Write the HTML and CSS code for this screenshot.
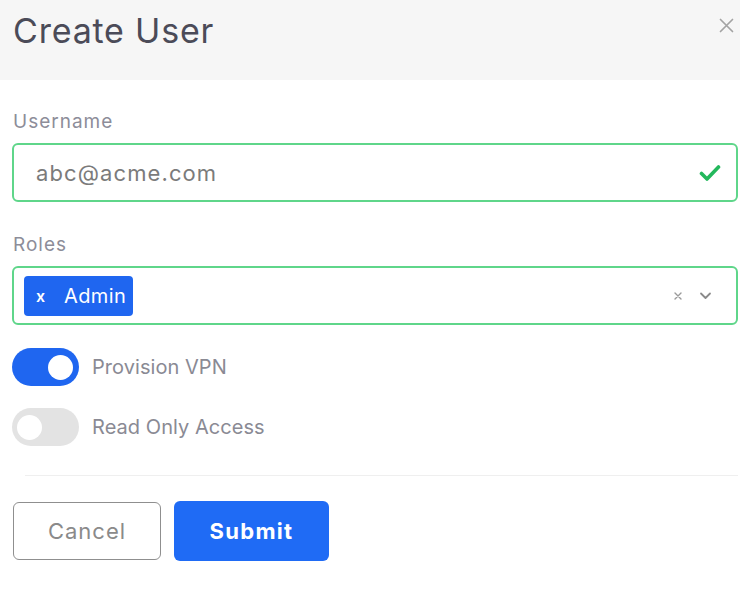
FILE: index.html
```html
<!DOCTYPE html>
<html lang="en">
<head>
<meta charset="utf-8">
<title>Create User</title>
<link rel="stylesheet" href="styles.css">
</head>
<body>
<div class="modal">
  <header class="modal-header">
    <h1 class="modal-title">Create User</h1>
    <button class="close-btn" aria-label="Close">
      <svg width="15" height="15" viewBox="0 0 15 15"><path d="M1.5 1.5 L13.5 13.5 M13.5 1.5 L1.5 13.5" stroke="#a3a3a3" stroke-width="1.7" stroke-linecap="round" fill="none"/></svg>
    </button>
  </header>
  <div class="modal-body">
    <label class="field-label">Username</label>
    <div class="input valid">
      <span class="input-text">abc@acme.com</span>
      <svg class="check" width="22" height="18" viewBox="0 0 22 18"><path d="M2.5 9.5 L8 15 L19.5 3" stroke="#23b85c" stroke-width="3.6" stroke-linecap="round" stroke-linejoin="round" fill="none"/></svg>
    </div>

    <label class="field-label roles-label">Roles</label>
    <div class="input select">
      <div class="tags">
        <span class="tag"><span class="tag-x">x</span><span class="tag-text">Admin</span></span>
      </div>
      <div class="select-icons">
        <svg width="10" height="10" viewBox="0 0 10 10"><path d="M2 2 L8 8 M8 2 L2 8" stroke="#9a9a9a" stroke-width="1.4" stroke-linecap="round" fill="none"/></svg>
        <svg width="13" height="9" viewBox="0 0 13 9"><path d="M2 2.5 L6.5 7 L11 2.5" stroke="#8a8a8a" stroke-width="1.8" stroke-linecap="round" stroke-linejoin="round" fill="none"/></svg>
      </div>
    </div>

    <div class="toggle-row first">
      <span class="switch on"><span class="knob"></span></span>
      <span class="toggle-label">Provision VPN</span>
    </div>
    <div class="toggle-row">
      <span class="switch off"><span class="knob"></span></span>
      <span class="toggle-label">Read Only Access</span>
    </div>

    <hr class="divider">

    <div class="actions">
      <button class="btn btn-cancel">Cancel</button>
      <button class="btn btn-submit">Submit</button>
    </div>
  </div>
</div>
</body>
</html>
```
FILE: styles.css
```css
* { box-sizing: border-box; }
html, body { margin: 0; padding: 0; background: #ffffff; }
body { font-family: "Inter", "Open Sans", sans-serif; width: 740px; height: 595px; overflow: hidden; }

.modal { width: 740px; }

.modal-header {
  height: 80px;
  background: #f6f6f6;
  display: flex;
  justify-content: space-between;
  align-items: flex-start;
  padding: 12px 6px 0 13px;
}
.modal-title {
  margin: 0;
  font-size: 34px;
  line-height: 38px;
  font-weight: 400;
  color: #4b4b58;
  letter-spacing: 0.8px;
}
.close-btn {
  border: 0;
  background: none;
  padding: 0;
  margin-top: 6px;
  width: 15px;
  height: 15px;
  display: flex;
}

.modal-body { padding: 32px 2px 0 12px; }

.field-label {
  display: block;
  font-size: 19px;
  line-height: 20px;
  color: #8d8d99;
  margin-left: 1px;
  letter-spacing: 1px;
}
.roles-label { margin-top: 33px; }

.input {
  margin-top: 11px;
  height: 59px;
  border: 2px solid #5fd68a;
  border-radius: 6px;
  display: flex;
  align-items: center;
  justify-content: space-between;
}
.input.valid { padding: 0 15px 0 22px; }
.input-text { font-size: 22px; color: #7b7b7b; letter-spacing: 1.1px; }
.check { display: block; }

.input.select { padding: 0 24px 0 10px; }
.tags { display: flex; }
.tag {
  display: flex;
  align-items: center;
  height: 40px;
  width: 109px;
  background: #1f66f0;
  border-radius: 4px;
  color: #ffffff;
  padding-left: 12px;
  font-size: 20px;
}
.tag-x { font-size: 16px; width: 28px; font-weight: 600; }
.tag-text { letter-spacing: 0.4px; }
.select-icons { display: flex; align-items: center; gap: 16px; }
.select-icons svg { display: block; }

.toggle-row {
  display: flex;
  align-items: center;
  gap: 13px;
  margin-top: 22px;
}
.toggle-row.first { margin-top: 23px; }
.switch {
  width: 67px;
  height: 38px;
  border-radius: 19px;
  display: flex;
  align-items: center;
  padding: 0 6px;
}
.switch.on { background: #1f66f0; justify-content: flex-end; }
.switch.off { background: #e3e3e3; justify-content: flex-start; padding-left: 5px; }
.knob {
  width: 25px;
  height: 25px;
  border-radius: 50%;
  background: #ffffff;
}
.toggle-label { font-size: 20px; color: #8a8a94; letter-spacing: 0.05px; }

.divider {
  border: 0;
  border-top: 1px solid #efefef;
  margin: 29px 0 0 13px;
}

.actions { display: flex; align-items: center; gap: 13px; margin-top: 25px; padding-left: 1px; }
.btn {
  height: 60px;
  border-radius: 6px;
  font-family: inherit;
  font-size: 22px;
  cursor: pointer;
}
.btn-cancel {
  width: 148px;
  height: 58px;
  background: #ffffff;
  border: 1.5px solid #8f8f8f;
  color: #8a8a8a;
  letter-spacing: 1px;
}
.btn-submit {
  width: 155px;
  background: #1f6bf5;
  border: 0;
  color: #ffffff;
  font-weight: 700;
  letter-spacing: 1.3px;
}
```
